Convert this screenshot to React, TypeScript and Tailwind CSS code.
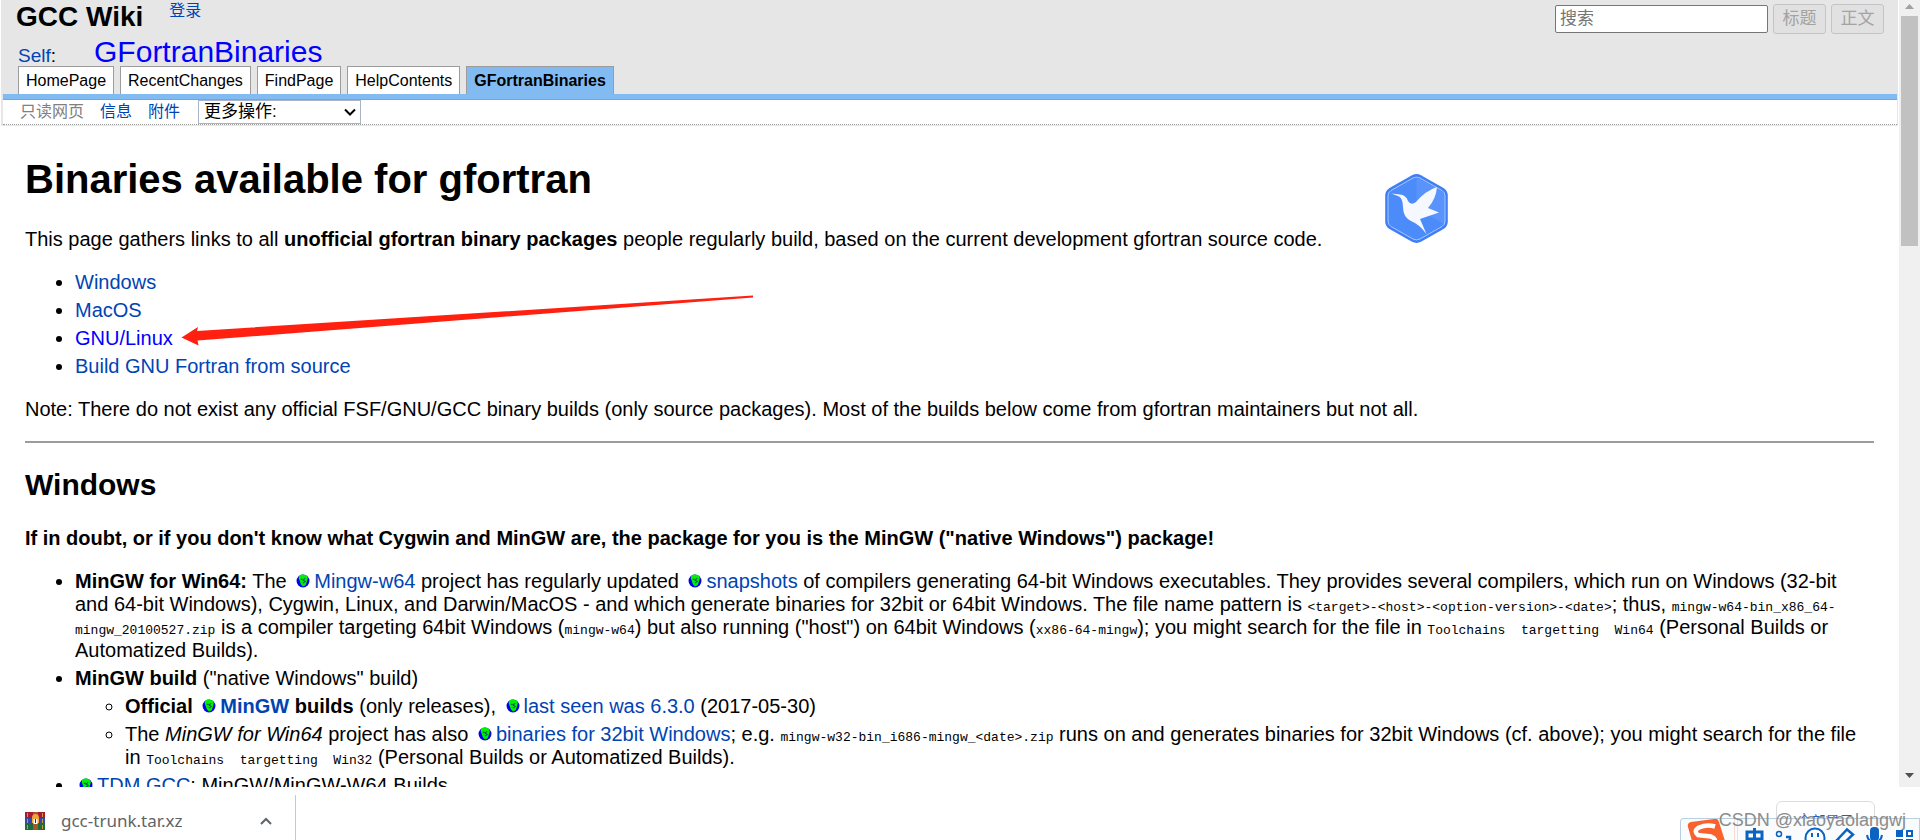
import React from 'react';

const link = 'text-[#0044b3]';

const tabs = ['HomePage', 'RecentChanges', 'FindPage', 'HelpContents'];

const Globe: React.FC = () => (
  <svg className="inline-block w-[14px] h-[14px] ml-1 mr-1 -mt-1 align-middle" viewBox="0 0 13 13">
    <circle cx="6.5" cy="6.5" r="6" fill="#0000f0" />
    <path d="M3 1.5 6 0.3 10 1.3 11 4 10 7.5 9 10.5 6.5 11.5 4.5 9.5 3.5 6.5 2.5 4Z" fill="#00f000" />
    <path d="M4.5 5h1.5M8.5 4 6.500 5.500 8.500 7 6.500 8.500" stroke="#064d6a" strokeWidth="1" fill="none" />
  </svg>
);

const External: React.FC<{ children: React.ReactNode }> = ({ children }) => (
  <>
    <Globe />
    <a href="#" className={link}>{children}</a>
  </>
);

const Code: React.FC<{ children: React.ReactNode }> = ({ children }) => (
  <code className="font-['Liberation_Mono',monospace] text-[13px] leading-none whitespace-pre-wrap">{children}</code>
);

const Header: React.FC = () => (
  <header className="mx-px bg-[#e6e6e6] pl-[2px] pr-px pb-px">
    <div className="flex items-start px-[13px] h-[35px]">
      <h1 className="text-[28px] leading-8 font-bold pt-px">GCC Wiki</h1>
      <a href="#" className={`${link} text-base leading-[22px] ml-[26px]`}>登录</a>
      <form className="ml-auto flex items-center gap-[5px] pt-1">
        <input
          type="text"
          aria-label="搜索"
          placeholder="搜索"
          className="w-[213px] h-7 border border-[#767676] rounded-xs bg-white px-1 text-[17px] placeholder:text-[#757575]"
        />
        <button type="button" disabled className="w-[53px] h-[30px] border border-[#c4c4c4] rounded-[3px] bg-[#e1e1e1] text-[17px] text-[#a3a3a3]">标题</button>
        <button type="button" disabled className="w-[53px] h-[30px] border border-[#c4c4c4] rounded-[3px] bg-[#e1e1e1] text-[17px] text-[#a3a3a3]">正文</button>
      </form>
    </div>

    <div className="flex items-baseline h-[31px] pl-[15px] leading-[34px]">
      <span className="text-[19px]"><a href="#" className={link}>Self</a>:</span>
      <a href="#" className="text-[30px] text-[#0000ff] ml-[38px]">GFortranBinaries</a>
    </div>

    <nav className="flex gap-[6px] h-7 pl-[15px] text-base leading-7">
      {tabs.map((tab) => (
        <a key={tab} href="#" className="border border-b-0 border-[#9c9c9c] bg-white px-[7px]">{tab}</a>
      ))}
      <a href="#" className="border border-b-0 border-[#9c9c9c] bg-[#81bbf2] px-[7px] font-bold">GFortranBinaries</a>
    </nav>

    <div className="border-t-[5px] border-[#81bbf2]">
      <div className="flex h-[26px] items-start border-t border-b border-t-[#9c9c9c] border-b-[#9c9c9c] [border-bottom-style:dotted] bg-white pl-[17px] text-base leading-6">
        <span className="text-[#808080]">只读网页</span>
        <a href="#" className={`${link} ml-4`}>信息</a>
        <a href="#" className={`${link} ml-4`}>附件</a>
        <div className="relative ml-[18px]">
          <select aria-label="更多操作" className="appearance-none block w-[163px] h-6 border border-[#a9b4c8] bg-white pl-[5px] text-[17px] leading-[20px]">
            <option>更多操作:</option>
          </select>
          <svg className="absolute right-[5px] top-2 w-3 h-2 pointer-events-none" viewBox="0 0 12 8">
            <path d="M1 1.5 6 6.5 11 1.5" stroke="#000" strokeWidth="2" fill="none" />
          </svg>
        </div>
      </div>
    </div>
  </header>
);

const Arrow: React.FC = () => (
  <svg className="absolute left-[181px] top-[295px] w-[573px] h-[52px] pointer-events-none" viewBox="0 0 573 52">
    <path d="M0.5 42.5 17 32 16 36 572 0.5 572 2.5 16.5 45.5 17.5 50.5Z" fill="#ff2010" />
  </svg>
);

const BirdBadge: React.FC = () => (
  <svg className="absolute left-[1385px] top-[174px] w-[63px] h-[69px]" viewBox="0 0 63 69">
    <path d="M27 1.2Q31.5-1 36 1.2L58.5 14Q62.5 16.5 62.8 21V48Q62.5 52.5 58.5 55L36 67.8Q31.5 70 27 67.8L4.5 55Q.5 52.5 .2 48V21Q.5 16.5 4.5 14Z" fill="#3f7ef5" />
    <path d="M28 4Q31.5 2.2 35 4L57 16.500Q60 18.300 60 22V47Q60 50.700 57 52.500L35 65Q31.500 66.800 28 65L6 52.500Q3 50.700 3 47V22Q3 18.300 6 16.500Z" fill="#4c8bfa" stroke="#a5c6ff" strokeWidth="1" />
    <path d="M31.5 4V34L59 50V22Q59 18 56 17L35 5Z" fill="#6299fb" opacity=".6" />
    <path d="M6.500 19.500 15 20.500Q21 21 23 27Q26 32 31 28Q40 17 52 13Q51 25 43 34L54 38.500 35 45 41.500 60Q34 50 26 47Q18 43 18 33Q18 25 14 22.500Z" fill="#f5f8ff" />
  </svg>
);

const Scrollbar: React.FC = () => (
  <div className="w-[21px] shrink-0 bg-[#f0f0f0] flex flex-col items-center">
    <svg className="w-[9px] h-[5px] mt-1 mb-[7px]" viewBox="0 0 9 5"><path d="M0 5 4.5 0 9 5Z" fill="#a0a0a0" /></svg>
    <div className="w-[17px] h-[230px] bg-[#c1c1c1]" />
    <svg className="w-[9px] h-[5px] mt-auto mb-[9px]" viewBox="0 0 9 5"><path d="M0 0 4.5 5 9 0Z" fill="#505050" /></svg>
  </div>
);

const Content: React.FC = () => (
  <main className="px-[25px] text-xl leading-[23px]">
    <h1 className="text-[40px] leading-[46px] font-bold mt-[30px] mb-[26px]">Binaries available for gfortran</h1>
    <p>
      This page gathers links to all <strong>unofficial gfortran binary packages</strong> people regularly build, based on the current development gfortran source code.
    </p>
    <ul className="list-disc pl-[50px] mt-5 mb-5 flex flex-col gap-[5px]">
      <li><a href="#" className={link}>Windows</a></li>
      <li><a href="#" className={link}>MacOS</a></li>
      <li><a href="#" className="text-[#0000ff]">GNU/Linux</a></li>
      <li><a href="#" className={link}>Build GNU Fortran from source</a></li>
    </ul>
    <p>Note: There do not exist any official FSF/GNU/GCC binary builds (only source packages). Most of the builds below come from gfortran maintainers but not all.</p>
    <hr className="border-0 h-[2px] bg-[#9c9c9c] my-5" />
    <h2 className="text-[30px] leading-[35px] font-bold mt-6 mb-[25px]">Windows</h2>
    <p className="font-bold">If in doubt, or if you don't know what Cygwin and MinGW are, the package for you is the MinGW ("native Windows") package!</p>
    <ul className="list-disc pl-[50px] mt-5 flex flex-col gap-[5px]">
      <li>
        <strong>MinGW for Win64:</strong> The <External>Mingw-w64</External> project has regularly updated <External>snapshots</External> of compilers generating 64-bit Windows executables. They provides several compilers, which run on Windows (32-bit and 64-bit Windows), Cygwin, Linux, and Darwin/MacOS - and which generate binaries for 32bit or 64bit Windows. The file name pattern is <Code>{'<target>-<host>-<option-version>-<date>'}</Code>; thus, <Code>mingw-w64-bin_x86_64-mingw_20100527.zip</Code> is a compiler targeting 64bit Windows (<Code>mingw-w64</Code>) but also running ("host") on 64bit Windows (<Code>xx86-64-mingw</Code>); you might search for the file in <Code>{'Toolchains  targetting  Win64'}</Code> (Personal Builds or Automatized Builds).
      </li>
      <li>
        <strong>MinGW build</strong> ("native Windows" build)
        <ul className="list-[circle] pl-[50px] mt-[5px] flex flex-col gap-[5px]">
          <li>
            <strong>Official <External>MinGW</External> builds</strong> (only releases), <External>last seen was 6.3.0</External> (2017-05-30)
          </li>
          <li>
            The <em>MinGW for Win64</em> project has also <External>binaries for 32bit Windows</External>; e.g. <Code>{'mingw-w32-bin_i686-mingw_<date>.zip'}</Code> runs on and generates binaries for 32bit Windows (cf. above); you might search for the file in <Code>{'Toolchains  targetting  Win32'}</Code> (Personal Builds or Automatized Builds).
          </li>
        </ul>
      </li>
      <li><External>TDM GCC</External>: MinGW/MinGW-W64 Builds</li>
    </ul>
  </main>
);

const ArchiveIcon: React.FC = () => (
  <svg className="w-5 h-[18px]" viewBox="0 0 20 18">
    <rect width="20" height="6" fill="#a51c30" />
    <rect y="6" width="20" height="6" fill="#3448a8" />
    <rect y="12" width="20" height="6" fill="#1f6b3c" />
    <path d="M2.5 1v4M2.5 7v4M2.5 13v4M17.5 1v4M17.5 7v4M17.5 13v4" stroke="#c99a3a" strokeWidth="1" />
    <rect x="8" width="5" height="18" fill="#a8562a" />
    <path d="M7 11V6Q7 2 10.500 2T14 6V11Z" fill="#f0a43c" />
    <rect x="8.5" y="7" width="4" height="5" fill="#fff" />
    <path d="M10.5 7v4" stroke="#333" />
  </svg>
);

const InputBar: React.FC = () => (
  <div className="absolute right-0 bottom-0 w-60 h-[22px] overflow-hidden rounded-tl-sm border border-b-0 border-[#b9cfe0] bg-[#f9fbfd]">
    <svg className="block w-60 h-[22px]" viewBox="0 0 240 22">
      <path d="M7 8Q6 4 10 3L33 0Q37-1 38 3L44 22H11Z" fill="#f9622d" />
      <path d="M34 7.5Q26 5 18 8.500Q12 12 17 16L30 17.500Q36 20 33 24" stroke="#fff" strokeWidth="4.500" fill="none" />
      <path d="M53.5 0V22M56.5 0V22" stroke="#fbd9cf" strokeWidth="1" />
      <path d="M66 22V13H81V22M73.5 9V22M66 20H81" stroke="#0a63c2" strokeWidth="3" fill="none" />
      <circle cx="98" cy="15" r="2.500" stroke="#0a63c2" strokeWidth="1.500" fill="none" />
      <path d="M105 18h4v3l-3 2" stroke="#0a63c2" strokeWidth="2.5" fill="none" />
      <circle cx="134" cy="19" r="9.5" stroke="#0a63c2" strokeWidth="2" fill="none" />
      <path d="M131 14v4M137 14v4" stroke="#0a63c2" strokeWidth="2" />
      <path d="M156 21 166 10.500 172 15.500 163 24Z" stroke="#0a63c2" strokeWidth="2.500" fill="none" />
      <rect x="189" y="8" width="9" height="14" rx="4" fill="#0a63c2" />
      <path d="M186 16Q187 23 193.500 23T201 16" stroke="#0a63c2" strokeWidth="2" fill="none" />
      <path d="M215 11h7v7h-7ZM215 20h7v2h-7ZM225 20h7v2h-7Z" fill="#0a63c2" />
      <path d="M226 12h5v5h-5Z" fill="none" stroke="#0a63c2" strokeWidth="2" />
    </svg>
  </div>
);

const DownloadBar: React.FC = () => (
  <footer className="relative h-[53px] shrink-0 overflow-hidden bg-white pt-2 flex">
    <div className="flex items-center w-[296px] border-r border-[#c8c8c8] pt-[6px] pl-[25px] pr-[23px]">
      <ArchiveIcon />
      <span className="ml-4 font-['Noto_Sans','Open_Sans',sans-serif] text-[17px] leading-6 text-[#5f6368]">gcc-trunk.tar.xz</span>
      <button type="button" aria-label="menu" className="ml-auto">
        <svg className="w-3 h-2" viewBox="0 0 12 8"><path d="M1 7 6 2 11 7" stroke="#5f6368" strokeWidth="2" fill="none" /></svg>
      </button>
    </div>
    <button type="button" className="absolute right-[45px] top-[14px] w-[99px] h-10 border border-[#dadce0] rounded-md text-[14px] text-[#1a5fe0]">全部显示</button>
    <InputBar />
    <span className="absolute right-[14px] top-[18px] text-[18px] leading-[30px] text-[#8c8c8c]">CSDN @xiaoyaolangwj</span>
  </footer>
);

const App: React.FC = () => {
  return (
    <div className="h-screen flex flex-col bg-white text-black font-['Liberation_Sans','Noto_Sans_CJK_SC',sans-serif]">
      <div className="relative flex flex-1 min-h-0 overflow-hidden">
        <div className="flex-1 min-w-0 overflow-hidden">
          <Header />
          <Content />
        </div>
        <Scrollbar />
        <Arrow />
        <BirdBadge />
      </div>
      <DownloadBar />
    </div>
  );
};

export default App;
